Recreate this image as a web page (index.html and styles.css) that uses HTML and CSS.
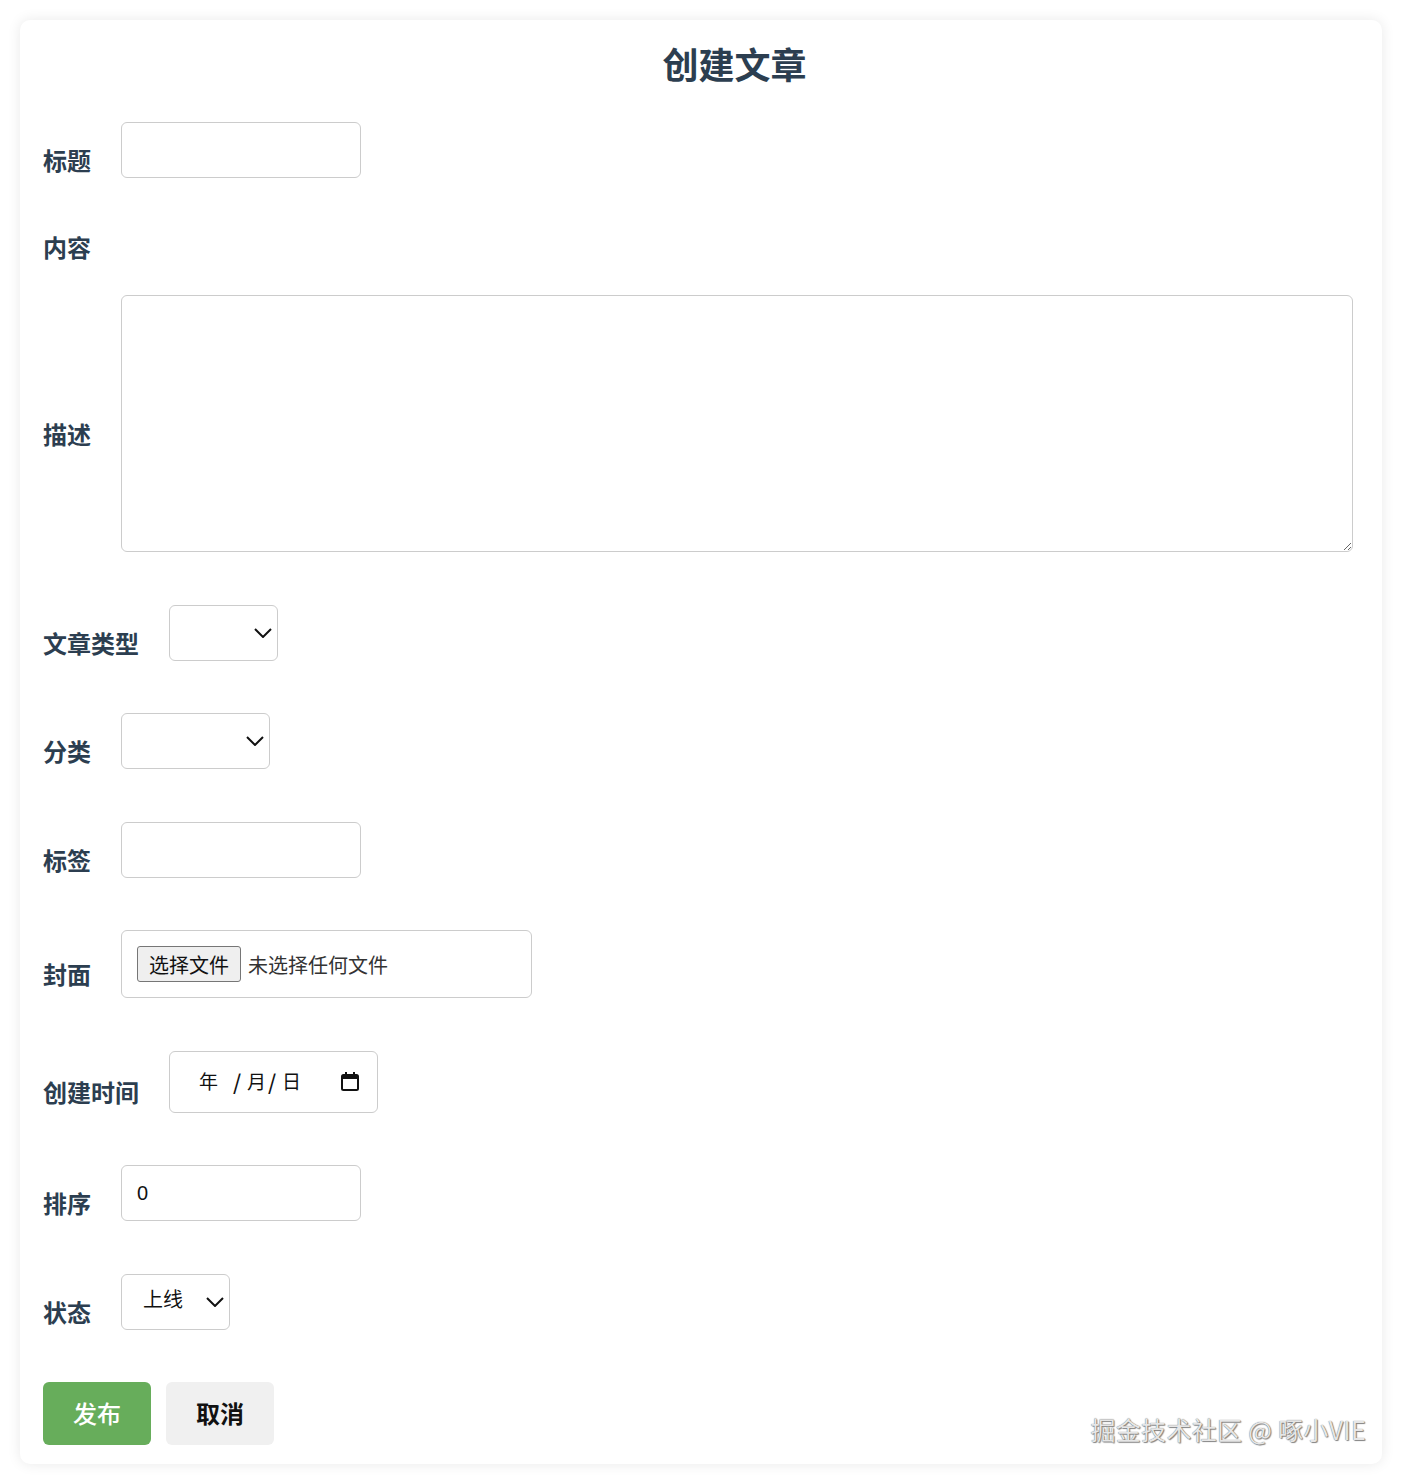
FILE: index.html
```html
<!DOCTYPE html>
<html lang="zh-CN">

<head>
    <meta charset="UTF-8">
    <meta name="viewport" content="width=device-width, initial-scale=1.0">
    <title>创建文章</title>
    <link rel="stylesheet" href="styles.css">
</head>

<body>
    <div class="article-card">
        <h2 class="page-title">创建文章</h2>

        <form class="article-form">
            <div class="form-item form-item-tight">
                <label class="form-label">标题</label>
                <input type="text" class="form-input">
            </div>

            <div class="form-item form-item-tight">
                <label class="form-label">内容</label>
                <div class="editor"></div>
            </div>

            <div class="form-item">
                <label class="form-label">描述</label>
                <textarea class="form-textarea"></textarea>
            </div>

            <div class="form-item">
                <label class="form-label">文章类型</label>
                <div class="select-wrap">
                    <select class="form-select select-type"></select>
                    <svg class="select-arrow" width="18" height="10" viewBox="0 0 18 10">
                        <path d="M1 1l8 8 8-8" fill="none" stroke="#111" stroke-width="2" />
                    </svg>
                </div>
            </div>

            <div class="form-item">
                <label class="form-label">分类</label>
                <div class="select-wrap">
                    <select class="form-select select-category"></select>
                    <svg class="select-arrow" width="18" height="10" viewBox="0 0 18 10">
                        <path d="M1 1l8 8 8-8" fill="none" stroke="#111" stroke-width="2" />
                    </svg>
                </div>
            </div>

            <div class="form-item">
                <label class="form-label">标签</label>
                <input type="text" class="form-input">
            </div>

            <div class="form-item">
                <label class="form-label">封面</label>
                <div class="file-field">
                    <label class="file-button">
                        选择文件
                        <input type="file" class="file-hidden">
                    </label>
                    <span class="file-name">未选择任何文件</span>
                </div>
            </div>

            <div class="form-item">
                <label class="form-label">创建时间</label>
                <div class="date-field">
                    <span class="date-part">年</span>
                    <span class="date-sep date-sep-first">/</span>
                    <span class="date-part">月</span>
                    <span class="date-sep">/</span>
                    <span class="date-part">日</span>
                    <svg class="date-icon" width="18" height="20" viewBox="0 0 18 20">
                        <rect x="1" y="4" width="16" height="15" rx="1.5" fill="none" stroke="#111" stroke-width="2" />
                        <rect x="1" y="4" width="16" height="4" fill="#111" />
                        <path d="M5 1v4M13 1v4" stroke="#111" stroke-width="2" />
                    </svg>
                </div>
            </div>

            <div class="form-item">
                <label class="form-label">排序</label>
                <input type="number" class="form-input" value="0">
            </div>

            <div class="form-item">
                <label class="form-label">状态</label>
                <div class="select-wrap">
                    <select class="form-select select-status">
                        <option>上线</option>
                        <option>下线</option>
                    </select>
                    <svg class="select-arrow" width="18" height="10" viewBox="0 0 18 10">
                        <path d="M1 1l8 8 8-8" fill="none" stroke="#111" stroke-width="2" />
                    </svg>
                </div>
            </div>

            <div class="form-actions">
                <button type="submit" class="btn btn-primary">发布</button>
                <button type="button" class="btn btn-default">取消</button>
            </div>
        </form>

        <div class="watermark">掘金技术社区 @ 啄小VIE</div>
    </div>
</body>

</html>
```

FILE: styles.css
```css
body {
    font-family: 'Liberation Sans', 'Noto Sans CJK SC', sans-serif;
    background-color: #fff;
    color: #2c3e50;
    margin: 0;
    padding: 20px;
}

.article-card {
    position: relative;
    background-color: #fff;
    border-radius: 10px;
    box-shadow: 0 0 14px rgba(0, 0, 0, 0.09);
    padding: 17px 22px 19px 23px;
}

.page-title {
    font-family: 'Noto Sans CJK SC', sans-serif;
    font-size: 36px;
    font-weight: 700;
    text-align: center;
    color: #2c3e50;
    margin: 0 0 33px;
    padding-left: 66px;
}

.form-item {
    display: flex;
    align-items: center;
    margin-bottom: 52.5px;
}

.form-item-tight {
    margin-bottom: 31.5px;
}

.form-label {
    font-family: 'Noto Sans CJK SC', sans-serif;
    font-size: 24px;
    font-weight: 700;
    line-height: 34px;
    padding-top: 20px;
    margin-right: 30px;
    color: #2c3e50;
}

.form-input,
.form-select,
.form-textarea,
.file-field,
.date-field {
    box-sizing: border-box;
    border: 1px solid #ccc;
    border-radius: 6px;
    background-color: #fff;
    font-family: 'Liberation Sans', 'Noto Sans CJK SC', sans-serif;
    font-size: 20px;
    color: #111;
}

.form-input {
    width: 240px;
    height: 56px;
    padding: 0 15px;
    outline: none;
}

.form-input[type="number"] {
    -moz-appearance: textfield;
}

.form-input::-webkit-inner-spin-button,
.form-input::-webkit-outer-spin-button {
    -webkit-appearance: none;
    margin: 0;
}

.form-textarea {
    width: 1232px;
    height: 257px;
    padding: 10px 15px;
}

.select-wrap {
    position: relative;
    display: flex;
}

.form-select {
    -webkit-appearance: none;
    appearance: none;
    height: 56px;
    padding: 0 20px 4px 21px;
}

.select-type {
    width: 109px;
}

.select-category {
    width: 149px;
}

.select-status {
    width: 109px;
}

.select-arrow {
    position: absolute;
    right: 6px;
    top: 23px;
    pointer-events: none;
}

/* 自定义文件选择框 */
.file-field {
    display: flex;
    align-items: center;
    width: 411px;
    height: 68px;
    padding: 0 15px;
}

.file-button {
    font-family: 'Noto Sans CJK SC', sans-serif;
    display: inline-flex;
    align-items: center;
    box-sizing: border-box;
    height: 36px;
    padding: 0 11px;
    font-size: 20px;
    color: #111;
    background-color: #efefef;
    border: 1px solid #767676;
    border-radius: 3px;
}

.file-hidden {
    display: none;
}

.file-name {
    font-family: 'Noto Sans CJK SC', sans-serif;
    font-size: 20px;
    color: #333;
    margin-left: 7px;
}

/* 日期输入框 */
.date-field {
    display: flex;
    align-items: center;
    width: 209px;
    height: 62px;
    padding: 0 18px 2px 29px;
    font-family: 'Noto Sans CJK SC', sans-serif;
    font-size: 19px;
}

.date-part {
    width: 19px;
}

.date-sep {
    display: inline-block;
    width: 14px;
    text-align: center;
    font-size: 21px;
    font-weight: 500;
    margin: 0 3px 0 -1px;
}

.date-sep-first {
    margin-left: 12px;
}

.date-icon {
    margin-left: auto;
}

.form-actions {
    display: flex;
    gap: 15px;
}

.btn {
    font-family: 'Noto Sans CJK SC', sans-serif;
    width: 108px;
    height: 63px;
    padding-bottom: 3px;
    font-size: 24px;
    font-weight: 700;
    border: none;
    border-radius: 6px;
    cursor: pointer;
}

.btn-primary {
    background-color: #67ad5b;
    color: #fff;
    font-weight: 500;
}

.btn-default {
    background-color: #f0f0f0;
    color: #111;
}

.watermark {
    position: absolute;
    right: 16px;
    bottom: 17px;
    font-family: 'Noto Sans CJK SC', sans-serif;
    font-size: 25px;
    letter-spacing: 0.3px;
    color: #e6e6e6;
    text-shadow: 0 0 1px #555, 1px 1px 1px #888;
    pointer-events: none;
}
```
